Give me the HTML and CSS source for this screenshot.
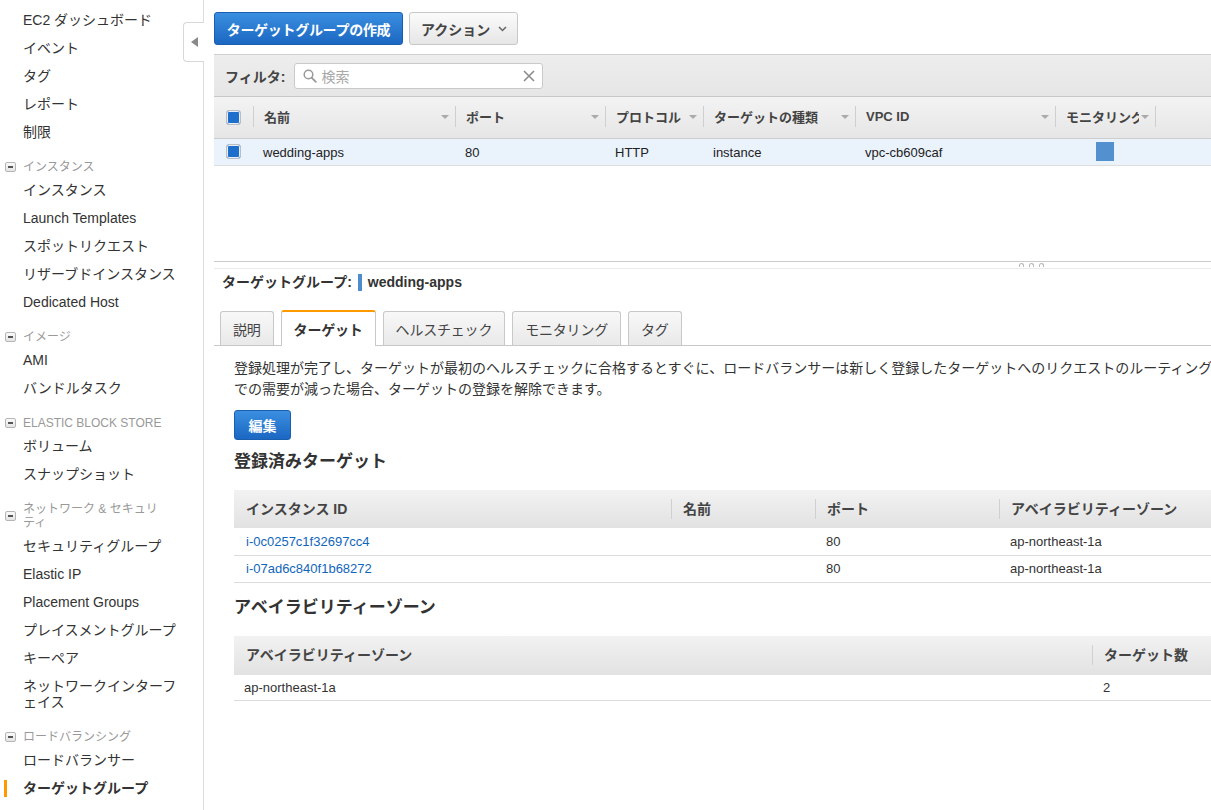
FILE: index.html
```html
<!DOCTYPE html>
<html lang="ja">
<head>
<meta charset="utf-8">
<title>ターゲットグループ</title>
<link rel="stylesheet" href="styles.css">
</head>
<body>
<div class="app">
  <nav class="sidebar">
    <ul class="nav">
      <li class="item">EC2 ダッシュボード</li>
      <li class="item">イベント</li>
      <li class="item">タグ</li>
      <li class="item">レポート</li>
      <li class="item">制限</li>
      <li class="sec"><span class="minus"></span><span>インスタンス</span></li>
      <li class="item">インスタンス</li>
      <li class="item">Launch Templates</li>
      <li class="item">スポットリクエスト</li>
      <li class="item">リザーブドインスタンス</li>
      <li class="item">Dedicated Host</li>
      <li class="sec"><span class="minus"></span><span>イメージ</span></li>
      <li class="item">AMI</li>
      <li class="item">バンドルタスク</li>
      <li class="sec"><span class="minus"></span><span>ELASTIC BLOCK STORE</span></li>
      <li class="item">ボリューム</li>
      <li class="item">スナップショット</li>
      <li class="sec"><span class="minus"></span><span>ネットワーク &amp; セキュリ<br>ティ</span></li>
      <li class="item">セキュリティグループ</li>
      <li class="item">Elastic IP</li>
      <li class="item">Placement Groups</li>
      <li class="item">プレイスメントグループ</li>
      <li class="item">キーペア</li>
      <li class="item">ネットワークインターフ<br>ェイス</li>
      <li class="sec"><span class="minus"></span><span>ロードバランシング</span></li>
      <li class="item">ロードバランサー</li>
      <li class="item active">ターゲットグループ</li>
    </ul>
    <div class="collapse">
      <svg width="7" height="10" viewBox="0 0 7 10"><path d="M7 0 L0 5 L7 10 Z" fill="#8a8a8a"/></svg>
    </div>
  </nav>

  <main class="main">
    <div class="toolbar">
      <button class="btn btn-primary btn-create">ターゲットグループの作成</button>
      <button class="btn btn-default btn-action">アクション
        <svg class="chev" width="9" height="6" viewBox="0 0 9 6"><path d="M1 1 L4.5 4.5 L8 1" fill="none" stroke="#666" stroke-width="1.5"/></svg>
      </button>
    </div>

    <section class="list">
      <div class="filter">
        <span class="filter-label">フィルタ:</span>
        <div class="search">
          <svg class="mag" width="14" height="14" viewBox="0 0 14 14"><circle cx="5.5" cy="5.5" r="4.3" fill="none" stroke="#999" stroke-width="1.5"/><path d="M8.6 8.6 L12.8 12.8" stroke="#999" stroke-width="1.8" stroke-linecap="round"/></svg>
          <span class="placeholder">検索</span>
          <svg class="clear" width="12" height="12" viewBox="0 0 12 12"><path d="M1 1 L11 11 M11 1 L1 11" stroke="#8c8c8c" stroke-width="1.6"/></svg>
        </div>
      </div>
      <table class="grid">
        <colgroup>
          <col class="c-chk"><col class="c-name"><col class="c-port"><col class="c-proto"><col class="c-type"><col class="c-vpc"><col class="c-mon"><col>
        </colgroup>
        <thead>
          <tr>
            <th class="chk-cell"><span class="chk"></span></th>
            <th><div class="hc"><span class="ht">名前</span><i class="sort"></i></div></th>
            <th><div class="hc"><span class="ht">ポート</span><i class="sort"></i></div></th>
            <th><div class="hc"><span class="ht">プロトコル</span><i class="sort"></i></div></th>
            <th><div class="hc"><span class="ht">ターゲットの種類</span><i class="sort"></i></div></th>
            <th><div class="hc"><span class="ht">VPC ID</span><i class="sort"></i></div></th>
            <th><div class="hc"><span class="ht">モニタリング</span><i class="sort"></i></div></th>
            <th><div class="hc"></div></th>
          </tr>
        </thead>
        <tbody>
          <tr class="selected">
            <td class="chk-cell"><span class="chk"></span></td>
            <td>wedding-apps</td>
            <td>80</td>
            <td>HTTP</td>
            <td>instance</td>
            <td>vpc-cb609caf</td>
            <td class="mon"><span class="mon-box"></span></td>
            <td></td>
          </tr>
        </tbody>
      </table>
    </section>

    <div class="splitter"><span class="dot"></span><span class="dot"></span><span class="dot"></span></div>

    <section class="details">
      <div class="dt-title">ターゲットグループ: <span class="dt-bar"></span>wedding-apps</div>
      <div class="tabs">
        <div class="tab">説明</div>
        <div class="tab active">ターゲット</div>
        <div class="tab">ヘルスチェック</div>
        <div class="tab">モニタリング</div>
        <div class="tab">タグ</div>
      </div>
      <div class="tab-body">
        <p class="desc">登録処理が完了し、ターゲットが最初のヘルスチェックに合格するとすぐに、ロードバランサーは新しく登録したターゲットへのリクエストのルーティングを開始します。アプリケーションの容量を増やすためにターゲットを登録するか、アプリケーション<br>での需要が減った場合、ターゲットの登録を解除できます。</p>
        <button class="btn btn-primary btn-edit">編集</button>

        <h3 class="sub">登録済みターゲット</h3>
        <table class="dtable targets">
          <colgroup><col class="t1"><col class="t2"><col class="t3"><col></colgroup>
          <thead>
            <tr>
              <th><div class="dh first">インスタンス ID</div></th>
              <th><div class="dh">名前</div></th>
              <th><div class="dh">ポート</div></th>
              <th><div class="dh">アベイラビリティーゾーン</div></th>
            </tr>
          </thead>
          <tbody>
            <tr><td class="first"><a href="#">i-0c0257c1f32697cc4</a></td><td></td><td>80</td><td>ap-northeast-1a</td></tr>
            <tr><td class="first"><a href="#">i-07ad6c840f1b68272</a></td><td></td><td>80</td><td>ap-northeast-1a</td></tr>
          </tbody>
        </table>

        <h3 class="sub sub2">アベイラビリティーゾーン</h3>
        <table class="dtable azs">
          <colgroup><col class="a1"><col></colgroup>
          <thead>
            <tr>
              <th><div class="dh first">アベイラビリティーゾーン</div></th>
              <th><div class="dh">ターゲット数</div></th>
            </tr>
          </thead>
          <tbody>
            <tr><td class="first az">ap-northeast-1a</td><td>2</td></tr>
          </tbody>
        </table>
      </div>
    </section>
  </main>
</div>
</body>
</html>
```

FILE: styles.css
```css
* { box-sizing: border-box; }

body {
  margin: 0;
  font-family: "Liberation Sans", "Noto Sans CJK JP", sans-serif;
  color: #333;
  background: #fff;
  overflow: hidden;
}

.app {
  display: flex;
  width: 1858px;
  height: 810px;
}

/* ---------- Sidebar ---------- */
.sidebar {
  flex: none;
  width: 204px;
  border-right: 1px solid #dcdcdc;
  position: relative;
}

.nav {
  list-style: none;
  margin: 0;
  padding: 6px 0 0;
}

.item {
  font-size: 14px;
  line-height: 16px;
  padding: 6px 10px 6px 23px;
  color: #333;
  position: relative;
}

.item.active {
  font-weight: bold;
}

.item.active::before {
  content: "";
  position: absolute;
  left: 4px;
  top: 6px;
  width: 3px;
  height: 17px;
  background: #f90;
}

.sec {
  display: flex;
  align-items: center;
  margin-top: 10px;
  padding: 4px 0 2px 5px;
  font-size: 12px;
  line-height: 14px;
  color: #999;
}

.minus {
  flex: none;
  width: 11px;
  height: 10px;
  margin-right: 7px;
  border: 1px solid #b5b5b5;
  border-radius: 2px;
  background: linear-gradient(#fafafa, #e4e4e4);
  position: relative;
}

.minus::after {
  content: "";
  position: absolute;
  left: 2px;
  top: 3px;
  width: 5px;
  height: 2px;
  background: #555;
}

.collapse {
  position: absolute;
  left: 183px;
  top: 22px;
  width: 21px;
  height: 40px;
  background: #fff;
  border: 1px solid #d8d8d8;
  border-right: none;
  border-radius: 4px 0 0 4px;
  display: flex;
  align-items: center;
  justify-content: center;
}

/* ---------- Main ---------- */
.main {
  flex: 1;
  min-width: 0;
  padding: 12px 10px 0 10px;
  display: flex;
  flex-direction: column;
}

.toolbar {
  display: flex;
  gap: 6px;
  height: 33px;
}

.btn {
  font-family: inherit;
  height: 33px;
  border-radius: 3px;
  font-size: 14px;
  font-weight: bold;
  display: inline-flex;
  align-items: center;
  justify-content: center;
  padding: 0 11px;
  white-space: nowrap;
  cursor: pointer;
}

.btn-primary {
  color: #fff;
  background: linear-gradient(#3a8fe0, #1b67c2);
  border: 1px solid #1a5eb0;
}

.btn-create {
  width: 189px;
  padding: 0;
  letter-spacing: -0.3px;
}

.btn-default {
  color: #444;
  background: linear-gradient(#fbfbfb, #e6e6e6);
  border: 1px solid #c8c8c8;
}

.btn-action {
  width: 109px;
  justify-content: flex-start;
  padding: 0 0 0 11px;
}

.chev { margin-left: 8px; flex: none; }

/* list pane */
.list {
  margin-top: 9px;
  height: 207px;
}

.filter {
  height: 43px;
  border-top: 1px solid #cfcfcf;
  border-bottom: 1px solid #c8c8c8;
  background: linear-gradient(#ededed, #e6e6e6);
  display: flex;
  align-items: center;
  padding-left: 11px;
}

.filter-label {
  font-size: 14px;
  font-weight: bold;
  color: #444;
  margin-right: 9px;
}

.search {
  width: 249px;
  height: 26px;
  background: #fff;
  border: 1px solid #cacaca;
  border-radius: 3px;
  display: flex;
  align-items: center;
  padding: 0 7px 0 8px;
}

.placeholder {
  font-size: 14px;
  color: #a8a8a8;
  margin-left: 4px;
  flex: 1;
}

.grid {
  width: 100%;
  border-collapse: collapse;
  table-layout: fixed;
  font-size: 13px;
}

.c-chk { width: 39px; }
.c-name { width: 202px; }
.c-port { width: 150px; }
.c-proto { width: 98px; }
.c-type { width: 152px; }
.c-vpc { width: 200px; }
.c-mon { width: 100px; }

.grid thead th {
  height: 41px;
  padding: 0 0 1px;
  text-align: left;
  background: linear-gradient(#f3f3f3, #e6e6e6);
  border-bottom: 1px solid #cdcdcd;
  font-weight: bold;
  color: #444;
}

.hc {
  display: flex;
  align-items: center;
  height: 21px;
  border-left: 1px solid #cfcfcf;
  padding: 0 6px 0 10px;
}

.ht {
  flex: 1;
  min-width: 0;
  white-space: nowrap;
  overflow: hidden;
}

.sort {
  flex: none;
  width: 0;
  height: 0;
  border-left: 4px solid transparent;
  border-right: 4px solid transparent;
  border-top: 4px solid #aaa;
  margin-left: 2px;
}

.chk-cell {
  padding: 0 0 0 12px !important;
}

.chk {
  display: block;
  width: 15px;
  height: 15px;
  border: 1px solid #b9bec6;
  border-radius: 3px;
  background: #1d6fcb;
  box-shadow: inset 0 0 0 1px #e8eef7;
}

.grid tbody td {
  height: 27px;
  padding: 1px 0 0 10px;
  border-bottom: 1px solid #dedede;
  white-space: nowrap;
  color: #222;
}

.grid tbody tr.selected td {
  background: #eaf2fc;
}

.grid td.mon {
  padding: 0;
  text-align: center;
}

.mon-box {
  display: inline-block;
  width: 18px;
  height: 19px;
  background: #5290d0;
  vertical-align: middle;
}

/* splitter */
.splitter {
  height: 8px;
  border-top: 1px solid #cbcbcb;
  border-bottom: 1px solid #ebebeb;
  display: flex;
  justify-content: center;
  align-items: center;
  gap: 5px;
}

.dot {
  width: 5px;
  height: 4px;
  border: 1px solid #b8b8b8;
  border-bottom: none;
  border-radius: 3px 3px 0 0;
}

/* details */
.dt-title {
  margin-top: 3px;
  padding-left: 8px;
  font-size: 14px;
  line-height: 20px;
  font-weight: bold;
  color: #333;
  display: flex;
  align-items: center;
}

.dt-bar {
  display: inline-block;
  width: 4px;
  height: 17px;
  background: #4d8ccd;
  margin: 0 6px 0 6px;
}

.tabs {
  margin-top: 18px;
  display: flex;
  align-items: flex-end;
  gap: 7px;
  padding-left: 6px;
  border-bottom: 1px solid #c8c8c8;
}

.tab {
  height: 34px;
  padding: 0 12px;
  border: 1px solid #c8c8c8;
  border-bottom: none;
  border-radius: 3px 3px 0 0;
  background: linear-gradient(#f8f8f8, #e9e9e9);
  font-size: 14px;
  letter-spacing: -0.2px;
  color: #444;
  display: flex;
  align-items: center;
}

.tab.active {
  height: 36px;
  margin-bottom: -1px;
  border-top: 2px solid #f90;
  background: #fff;
  font-weight: bold;
  color: #333;
}

.tab-body {
  padding: 12px 20px 0;
}

.desc {
  margin: 0;
  font-size: 14px;
  line-height: 21px;
  color: #333;
  white-space: nowrap;
}

.btn-edit {
  margin-top: 10px;
  width: 57px;
  height: 30px;
  padding: 0;
}

.sub {
  margin: 10px 0 0;
  font-size: 17px;
  line-height: 24px;
  font-weight: bold;
  color: #333;
}

.sub2 { margin-top: 13px; }

.dtable {
  margin-top: 16px;
  width: 100%;
  border-collapse: collapse;
  table-layout: fixed;
}

.t1 { width: 437px; }
.t2 { width: 144px; }
.t3 { width: 184px; }
.a1 { width: 858px; }

.dtable thead th {
  padding: 0;
  height: 38px;
  text-align: left;
  background: linear-gradient(#f2f2f2, #e2e2e2);
  font-size: 14px;
  font-weight: bold;
  color: #444;
}

.azs thead th { height: 39px; }

.dh {
  height: 20px;
  line-height: 20px;
  border-left: 1px solid #d0d0d0;
  padding-left: 11px;
  white-space: nowrap;
}

.dh.first {
  border-left: none;
  padding-left: 12px;
}

.dtable tbody td {
  height: 27px;
  padding: 0 0 0 11px;
  border-bottom: 1px solid #dcdcdc;
  font-size: 13px;
  color: #333;
  white-space: nowrap;
}

.dtable tbody td.first { padding-left: 12px; }
.dtable tbody td.az { padding-left: 10px; }
.azs tbody td { height: 26px; }

.dtable a {
  color: #1166bb;
  text-decoration: none;
}
```
